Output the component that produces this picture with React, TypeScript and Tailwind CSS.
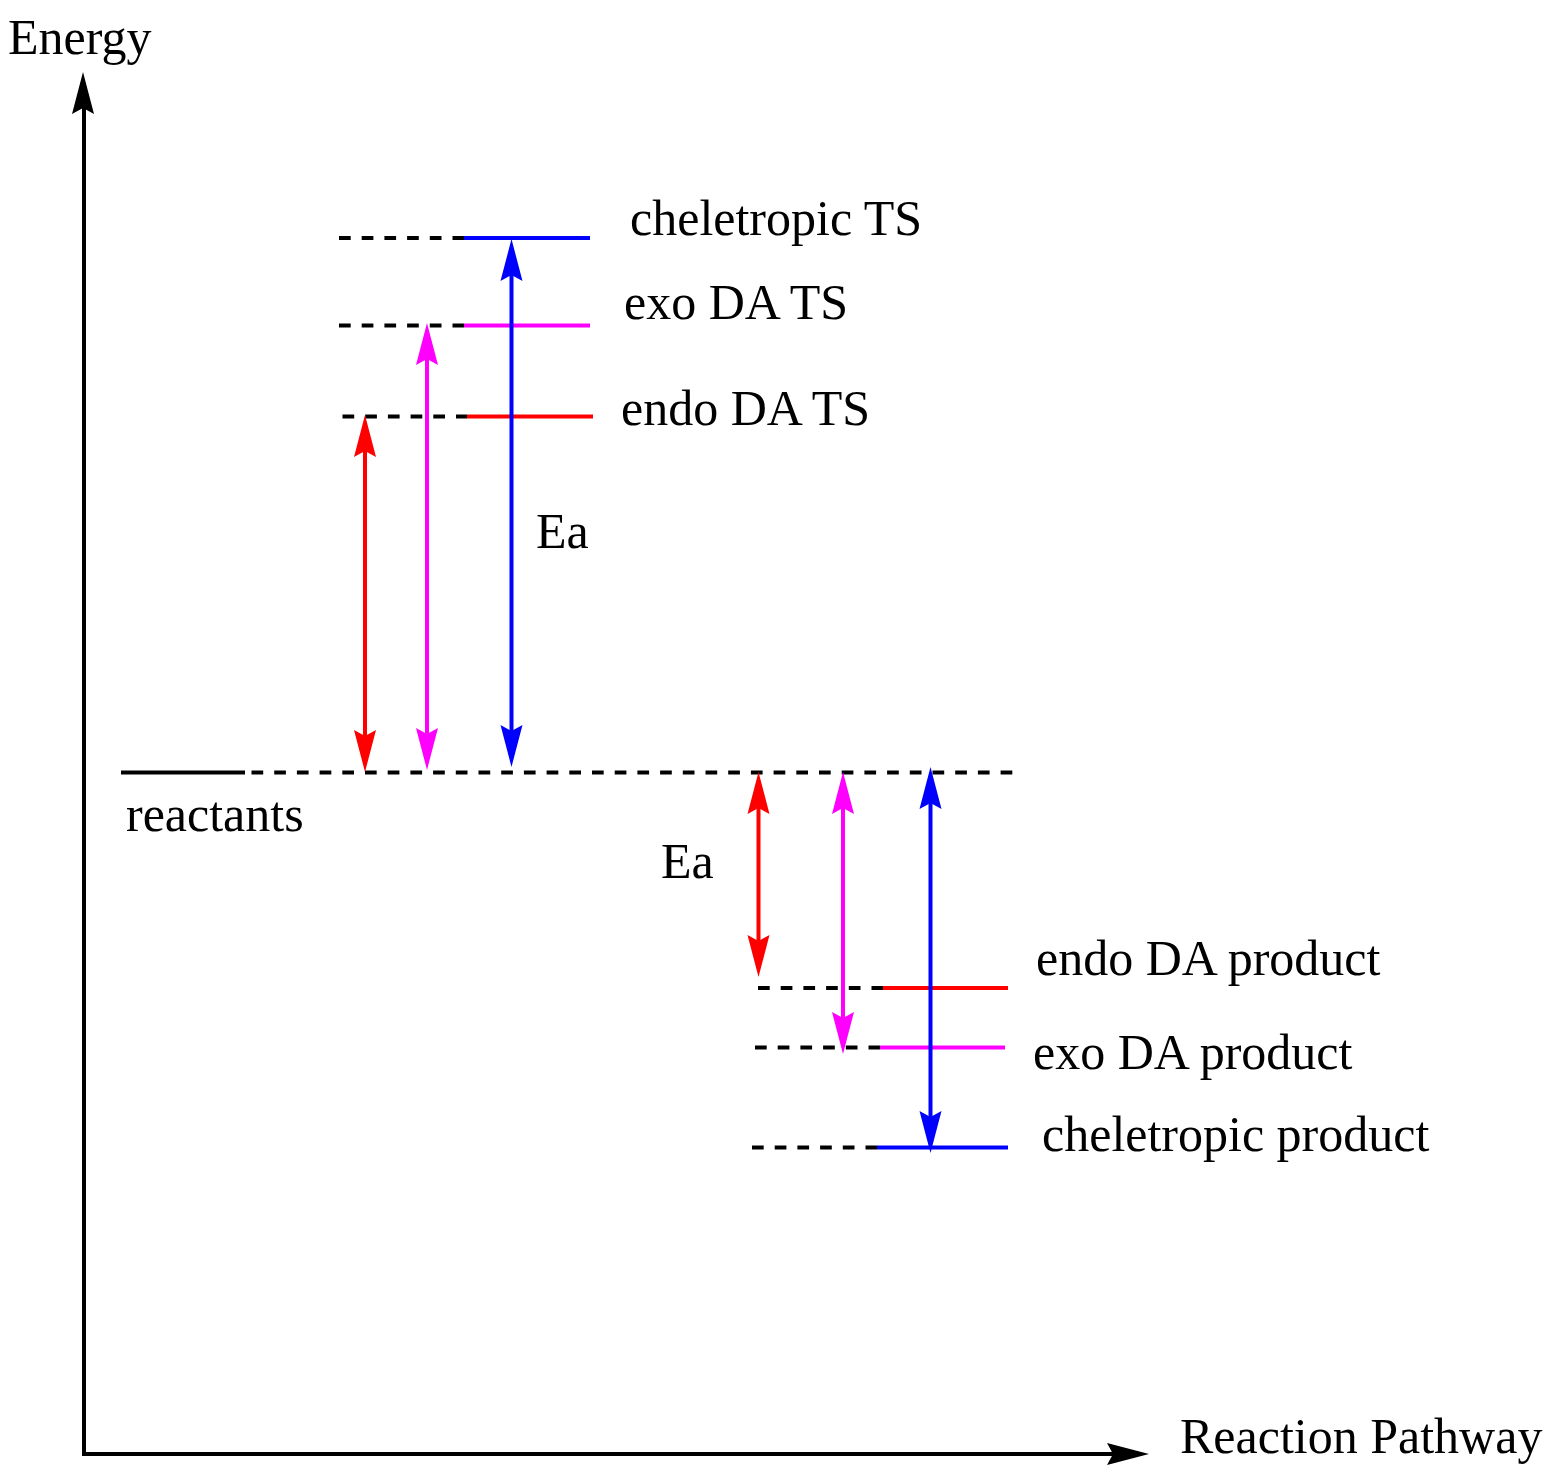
import React from 'react';

type Level = { y: number; dashFrom: number; split: number; end: number; color: string };
type Arrow = { x: number; top: number; bottom: number; color: string };
type Label = { text: string; x: number; y: number };

const levels: Level[] = [
  { y: 238, dashFrom: 339, split: 464, end: 590, color: '#0000ff' },
  { y: 325.5, dashFrom: 339, split: 464, end: 590, color: '#ff00ff' },
  { y: 416.5, dashFrom: 342.5, split: 467, end: 593, color: '#ff0000' },
  { y: 988, dashFrom: 758, split: 883, end: 1008, color: '#ff0000' },
  { y: 1047.5, dashFrom: 755, split: 880, end: 1005, color: '#ff00ff' },
  { y: 1147.5, dashFrom: 752, split: 877, end: 1008, color: '#0000ff' },
];

const arrows: Arrow[] = [
  { x: 365, top: 415, bottom: 772, color: '#ff0000' },
  { x: 427, top: 323, bottom: 770, color: '#ff00ff' },
  { x: 511.5, top: 239, bottom: 767, color: '#0000ff' },
  { x: 758.5, top: 772, bottom: 977, color: '#ff0000' },
  { x: 843, top: 772, bottom: 1054, color: '#ff00ff' },
  { x: 930.5, top: 767, bottom: 1153, color: '#0000ff' },
];

const labels: Label[] = [
  { text: 'Energy', x: 8, y: 54 },
  { text: 'cheletropic TS', x: 630, y: 235 },
  { text: 'exo DA TS', x: 624, y: 318.5 },
  { text: 'endo DA TS', x: 621, y: 424.5 },
  { text: 'Ea', x: 536, y: 547.5 },
  { text: 'reactants', x: 126, y: 831 },
  { text: 'Ea', x: 661, y: 878 },
  { text: 'endo DA product', x: 1036, y: 974.5 },
  { text: 'exo DA product', x: 1033, y: 1068.5 },
  { text: 'cheletropic product', x: 1042, y: 1151 },
  { text: 'Reaction Pathway', x: 1180, y: 1453 },
];

// arrow head pointing up (dir = -1) or down (dir = 1), tip at (x, y)
function head(x: number, y: number, dir: number) {
  const len = 42;
  const half = 11;
  const notch = 36;
  return `${x},${y} ${x + half},${y - dir * len} ${x},${y - dir * notch} ${x - half},${y - dir * len}`;
}

function EnergyDiagram() {
  return (
    <svg width="1552" height="1476" viewBox="0 0 1552 1476" className="block">
      {/* axes */}
      <line x1="84" y1="100" x2="84" y2="1456" stroke="#000" strokeWidth="4" />
      <line x1="82" y1="1454" x2="1120" y2="1454" stroke="#000" strokeWidth="4" />
      <polygon points="83,72 94,114 83,108 72,114" fill="#000" />
      <polygon points="1149,1454 1107,1443 1113,1454 1107,1465" fill="#000" />

      {/* reactants */}
      <line x1="121" y1="772.5" x2="245" y2="772.5" stroke="#000" strokeWidth="4" />
      <line x1="251.5" y1="772.5" x2="1015" y2="772.5" stroke="#000" strokeWidth="4" strokeDasharray="11.7 11" />

      {/* energy levels */}
      {levels.map((l, i) => (
        <g key={i}>
          <line x1={l.dashFrom} y1={l.y} x2={l.split} y2={l.y} stroke="#000" strokeWidth="4" strokeDasharray="11.7 11" />
          <line x1={l.split} y1={l.y} x2={l.end} y2={l.y} stroke={l.color} strokeWidth="4" />
        </g>
      ))}

      {/* Ea arrows */}
      {arrows.map((a, i) => (
        <g key={i}>
          <line x1={a.x} y1={a.top + 30} x2={a.x} y2={a.bottom - 30} stroke={a.color} strokeWidth="4" />
          <polygon points={head(a.x, a.top, -1)} fill={a.color} />
          <polygon points={head(a.x, a.bottom, 1)} fill={a.color} />
        </g>
      ))}

      {labels.map((t, i) => (
        <text
          key={i}
          x={t.x}
          y={t.y}
          fontSize="50"
          fill="#000"
          style={{ fontFamily: '"Liberation Serif", "Times New Roman", serif' }}
        >
          {t.text}
        </text>
      ))}
    </svg>
  );
}

export default function App() {
  return (
    <div className="w-[1552px] h-[1476px] bg-white overflow-hidden">
      <EnergyDiagram />
    </div>
  );
}
